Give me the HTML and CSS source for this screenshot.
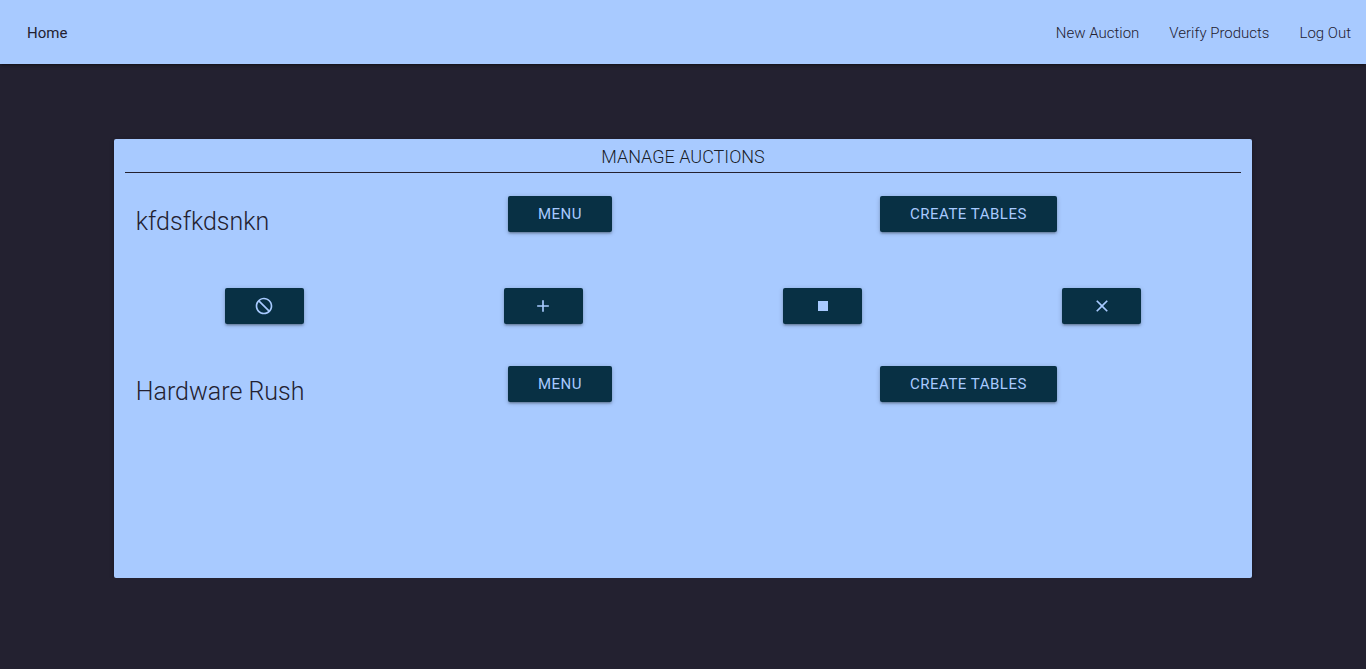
FILE: index.html
```html
<!DOCTYPE html>
<html lang="en">
<head>
<meta charset="utf-8">
<meta name="viewport" content="width=device-width, initial-scale=1">
<title>Manage Auctions</title>
<link rel="stylesheet" href="styles.css">
</head>
<body>
<nav class="navbar">
  <a class="nav-link nav-home" href="#">Home</a>
  <div class="nav-links">
    <a class="nav-link" href="#">New Auction</a>
    <a class="nav-link" href="#">Verify Products</a>
    <a class="nav-link" href="#">Log Out</a>
  </div>
</nav>
<main class="card">
  <h1 class="card-title">Manage Auctions</h1>
  <section class="auction">
    <div class="auction-head">
      <h2 class="auction-name">kfdsfkdsnkn</h2>
      <div><button class="btn" type="button">Menu</button></div>
      <div><button class="btn" type="button">Create tables</button></div>
    </div>
    <div class="auction-actions">
      <button class="btn btn-icon" type="button" aria-label="Disable"><svg class="icon" viewBox="0 0 24 24"><path d="M12 2C6.480 2 2 6.480 2 12s4.480 10 10 10 10-4.480 10-10S17.520 2 12 2zm0 18c-4.420 0-8-3.580-8-8 0-1.850.630-3.550 1.690-4.900L16.900 18.310C15.550 19.370 13.850 20 12 20zm6.310-3.100L7.100 5.690C8.450 4.630 10.150 4 12 4c4.420 0 8 3.580 8 8 0 1.850-.630 3.550-1.690 4.900z"/></svg></button>
      <button class="btn btn-icon" type="button" aria-label="Add"><svg class="icon" viewBox="0 0 24 24"><path d="M19 13h-6v6h-2v-6H5v-2h6V5h2v6h6v2z"/></svg></button>
      <button class="btn btn-icon" type="button" aria-label="Stop"><svg class="icon" viewBox="0 0 24 24"><path d="M6 6h12v12H6z"/></svg></button>
      <button class="btn btn-icon" type="button" aria-label="Close"><svg class="icon" viewBox="0 0 24 24"><path d="M19 6.410L17.590 5 12 10.590 6.410 5 5 6.410 10.590 12 5 17.590 6.410 19 12 13.410 17.590 19 19 17.590 13.410 12z"/></svg></button>
    </div>
  </section>
  <section class="auction">
    <div class="auction-head">
      <h2 class="auction-name">Hardware Rush</h2>
      <div><button class="btn" type="button">Menu</button></div>
      <div><button class="btn" type="button">Create tables</button></div>
    </div>
  </section>
</main>
</body>
</html>
```
FILE: styles.css
```css
* { box-sizing: border-box; }
body {
  margin: 0;
  background: #232130;
  color: rgba(0, 0, 0, 0.87);
  font: 300 15px/22px Roboto, sans-serif;
}
.navbar {
  display: flex;
  justify-content: space-between;
  height: 64px;
  padding-left: 12px;
  background: #a8caff;
  line-height: 66px;
  box-shadow: 0 2px 2px rgba(0, 0, 0, 0.14), 0 3px 1px -2px rgba(0, 0, 0, 0.12), 0 1px 5px rgba(0, 0, 0, 0.2);
}
.nav-links { display: flex; }
.nav-link {
  padding: 0 15px;
  color: #232130;
  text-decoration: none;
}
.nav-home { font-weight: 400; }
.card {
  width: 83.333%;
  min-height: 439px;
  margin: 75px auto 0;
  padding: 4px 11px 24px;
  border-radius: 2px;
  background: #a8caff;
  box-shadow: 0 2px 2px rgba(0, 0, 0, 0.14), 0 3px 1px -2px rgba(0, 0, 0, 0.12), 0 1px 5px rgba(0, 0, 0, 0.2);
}
.card-title {
  margin: 0 0 23px;
  padding-bottom: 2px;
  border-bottom: 1px solid #232130;
  font-size: 18px;
  font-weight: 300;
  line-height: 27px;
  text-align: center;
  text-transform: uppercase;
}
.auction-head {
  display: grid;
  grid-template-columns: repeat(3, 1fr);
  min-height: 70px;
}
.auction-head > * { padding-left: 11px; }
.auction-name {
  margin: 11px 0 0;
  color: #232130;
  font-size: 25px;
  font-weight: 300;
  line-height: 30px;
}
.auction-actions {
  display: grid;
  grid-template-columns: repeat(4, 1fr);
  justify-items: center;
  margin: 22px 0 42px;
}
.btn {
  display: block;
  height: 36px;
  padding: 0 30px;
  border: 0;
  border-radius: 2px;
  background: #083044;
  color: #a8caff;
  font: 400 15px/36px Roboto, sans-serif;
  letter-spacing: 0.5px;
  text-transform: uppercase;
  cursor: pointer;
  box-shadow: 0 2px 2px rgba(0, 0, 0, 0.14), 0 3px 1px -2px rgba(0, 0, 0, 0.12), 0 1px 5px rgba(0, 0, 0, 0.2);
}
.btn-icon {
  display: flex;
  align-items: center;
  justify-content: center;
  width: 79px;
  padding: 0;
}
.icon {
  display: block;
  width: 20px;
  height: 20px;
  fill: currentColor;
}
```
